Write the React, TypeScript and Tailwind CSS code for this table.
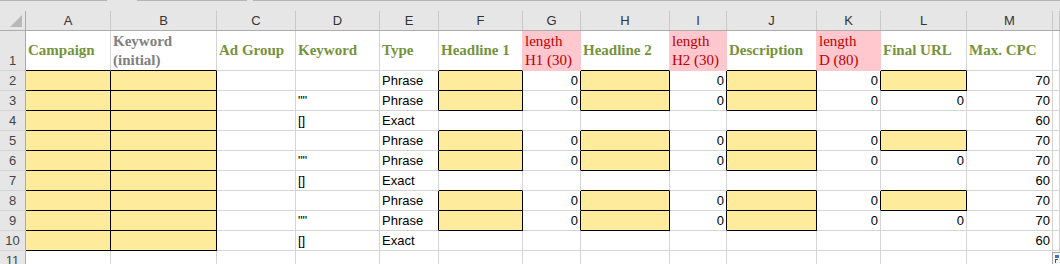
import React from 'react'

// column widths include the 1px gridline on the right edge
const COLS = [
  { key: 'A', w: 'w-[85px]' },
  { key: 'B', w: 'w-[106px]' },
  { key: 'C', w: 'w-[79px]' },
  { key: 'D', w: 'w-[84px]' },
  { key: 'E', w: 'w-[59px]' },
  { key: 'F', w: 'w-[84px]' },
  { key: 'G', w: 'w-[58px]' },
  { key: 'H', w: 'w-[89px]' },
  { key: 'I', w: 'w-[57px]' },
  { key: 'J', w: 'w-[90px]' },
  { key: 'K', w: 'w-[64px]' },
  { key: 'L', w: 'w-[86px]' },
  { key: 'M', w: 'w-[86px]' },
  { key: '', w: 'flex-1' },
]

type Kind = 'green' | 'gray' | 'pink'

const HEADERS: { text: string[]; kind: Kind }[] = [
  { text: ['Campaign'], kind: 'green' },
  { text: ['Keyword', '(initial)'], kind: 'gray' },
  { text: ['Ad Group'], kind: 'green' },
  { text: ['Keyword'], kind: 'green' },
  { text: ['Type'], kind: 'green' },
  { text: ['Headline 1'], kind: 'green' },
  { text: ['length', 'H1 (30)'], kind: 'pink' },
  { text: ['Headline 2'], kind: 'green' },
  { text: ['length', 'H2 (30)'], kind: 'pink' },
  { text: ['Description'], kind: 'green' },
  { text: ['length', 'D (80)'], kind: 'pink' },
  { text: ['Final URL'], kind: 'green' },
  { text: ['Max. CPC'], kind: 'green' },
  { text: [''], kind: 'green' },
]

// each block of three rows repeats: phrase, phrase "", exact []
const phase = (r: number) => (r - 2) % 3

const isYellow = (r: number, c: number) => {
  if (r < 2 || r > 10) return false
  if (c === 0 || c === 1) return true
  if (c === 5 || c === 7 || c === 9) return phase(r) !== 2
  if (c === 11) return phase(r) === 0
  return false
}

const isPink = (r: number, c: number) => r === 1 && (c === 6 || c === 8 || c === 10)

const cellValue = (r: number, c: number): { v: string; num?: boolean } => {
  if (r < 2 || r > 10) return { v: '' }
  const p = phase(r)
  if (c === 3) return { v: p === 1 ? '""' : p === 2 ? '[]' : '' }
  if (c === 4) return { v: p === 2 ? 'Exact' : 'Phrase' }
  if (c === 6 || c === 8 || c === 10) return { v: p === 2 ? '' : '0', num: true }
  if (c === 11) return { v: p === 1 ? '0' : '', num: true }
  if (c === 12) return { v: p === 2 ? '60' : '70', num: true }
  return { v: '' }
}

const rightBorder = (r: number, c: number) => {
  if (isYellow(r, c) || isYellow(r, c + 1)) return 'border-r-black'
  if (isPink(r, c) || isPink(r, c + 1)) return 'border-r-[#ffc7ce]'
  return 'border-r-[#d4d4d4]'
}

const bottomBorder = (r: number, c: number) => {
  if (isYellow(r, c) || isYellow(r + 1, c)) return 'border-b-black'
  if (isPink(r, c)) return 'border-b-[#ffc7ce]'
  return 'border-b-[#d4d4d4]'
}

const headerText: Record<Kind, string> = {
  green: 'text-[#76923c] font-bold',
  gray: 'text-[#808080] font-bold',
  pink: 'text-[#c00000]',
}

function RowHeader({ n, tall }: { n: number; tall?: boolean }) {
  return (
    <div
      className={`w-[26px] shrink-0 ${tall ? 'h-[40px]' : 'h-[20px]'} bg-[#e6e6e6] border-r border-b border-r-[#ababab] border-b-[#d4d4d4] flex items-end justify-center text-[13px] leading-[18px] text-[#444]`}
    >
      {n}
    </div>
  )
}

export default function App() {
  const rows = [2, 3, 4, 5, 6, 7, 8, 9, 10, 11]

  return (
    <div className="w-[1060px] h-[264px] overflow-hidden bg-white relative font-['Liberation_Sans',Arial,sans-serif]">
      {/* strip left from the ribbon above the grid */}
      <div className="h-[11px] bg-[#e6e6e6] flex">
        <div className="h-px w-[107px] bg-[#b4b4b4]" />
        <div className="h-px w-[30px]" />
        <div className="h-px w-[110px] bg-[#b4b4b4]" />
        <div className="h-px w-[6px]" />
        <div className="h-px flex-1 bg-[#b4b4b4]" />
      </div>

      {/* column letters */}
      <div className="flex h-[20px] bg-[#e6e6e6] border-b border-[#ababab]">
        <div className="w-[26px] shrink-0 border-r border-[#ababab] relative">
          <div className="absolute right-[3px] bottom-[3px] w-0 h-0 border-l-[12px] border-l-transparent border-b-[12px] border-b-[#b8b8b8]" />
        </div>
        {COLS.map((col, i) => (
          <div
            key={i}
            className={`${col.w} shrink-0 border-r border-[#c8c8c8] flex items-center justify-center text-[13px] text-[#333]`}
          >
            {col.key}
          </div>
        ))}
      </div>

      {/* row 1: headings */}
      <div className="flex">
        <RowHeader n={1} tall />
        {HEADERS.map((h, c) => (
          <div
            key={c}
            className={`${COLS[c].w} shrink-0 h-[40px] border-r border-b ${rightBorder(1, c)} ${bottomBorder(1, c)} ${
              h.kind === 'pink' ? 'bg-[#ffc7ce]' : ''
            } flex flex-col justify-center px-[2px] font-['Liberation_Serif','Times_New_Roman',serif] text-[15px] leading-[19px] whitespace-nowrap ${headerText[h.kind]}`}
          >
            {h.text.map((t, j) => (
              <span key={j}>{t}</span>
            ))}
          </div>
        ))}
      </div>

      {/* data rows */}
      {rows.map((r) => (
        <div key={r} className="flex">
          <RowHeader n={r} />
          {COLS.map((col, c) => {
            const cell = cellValue(r, c)
            return (
              <div
                key={c}
                className={`${col.w} shrink-0 h-[20px] border-r border-b ${rightBorder(r, c)} ${bottomBorder(r, c)} ${
                  isYellow(r, c) ? 'bg-[#ffeb9c]' : ''
                } flex items-end ${cell.num ? 'justify-end pr-[2px]' : 'justify-start pl-[2px]'} text-[13px] leading-[18px] text-black`}
              >
                {cell.v}
              </div>
            )
          })}
        </div>
      ))}

      {/* paste options button peeking in at the corner */}
      <div className="absolute left-[1052px] top-[252px] w-[14px] h-[14px] bg-[#f4f4f4] border border-[#a8a8a8] pl-[2px] pt-[2px] flex flex-col gap-[1px]">
        <div className="w-[4px] h-[3px] bg-[#3b74d6]" />
        <div className="w-[3px] h-[4px] border-l border-t border-[#555]" />
      </div>
    </div>
  )
}
